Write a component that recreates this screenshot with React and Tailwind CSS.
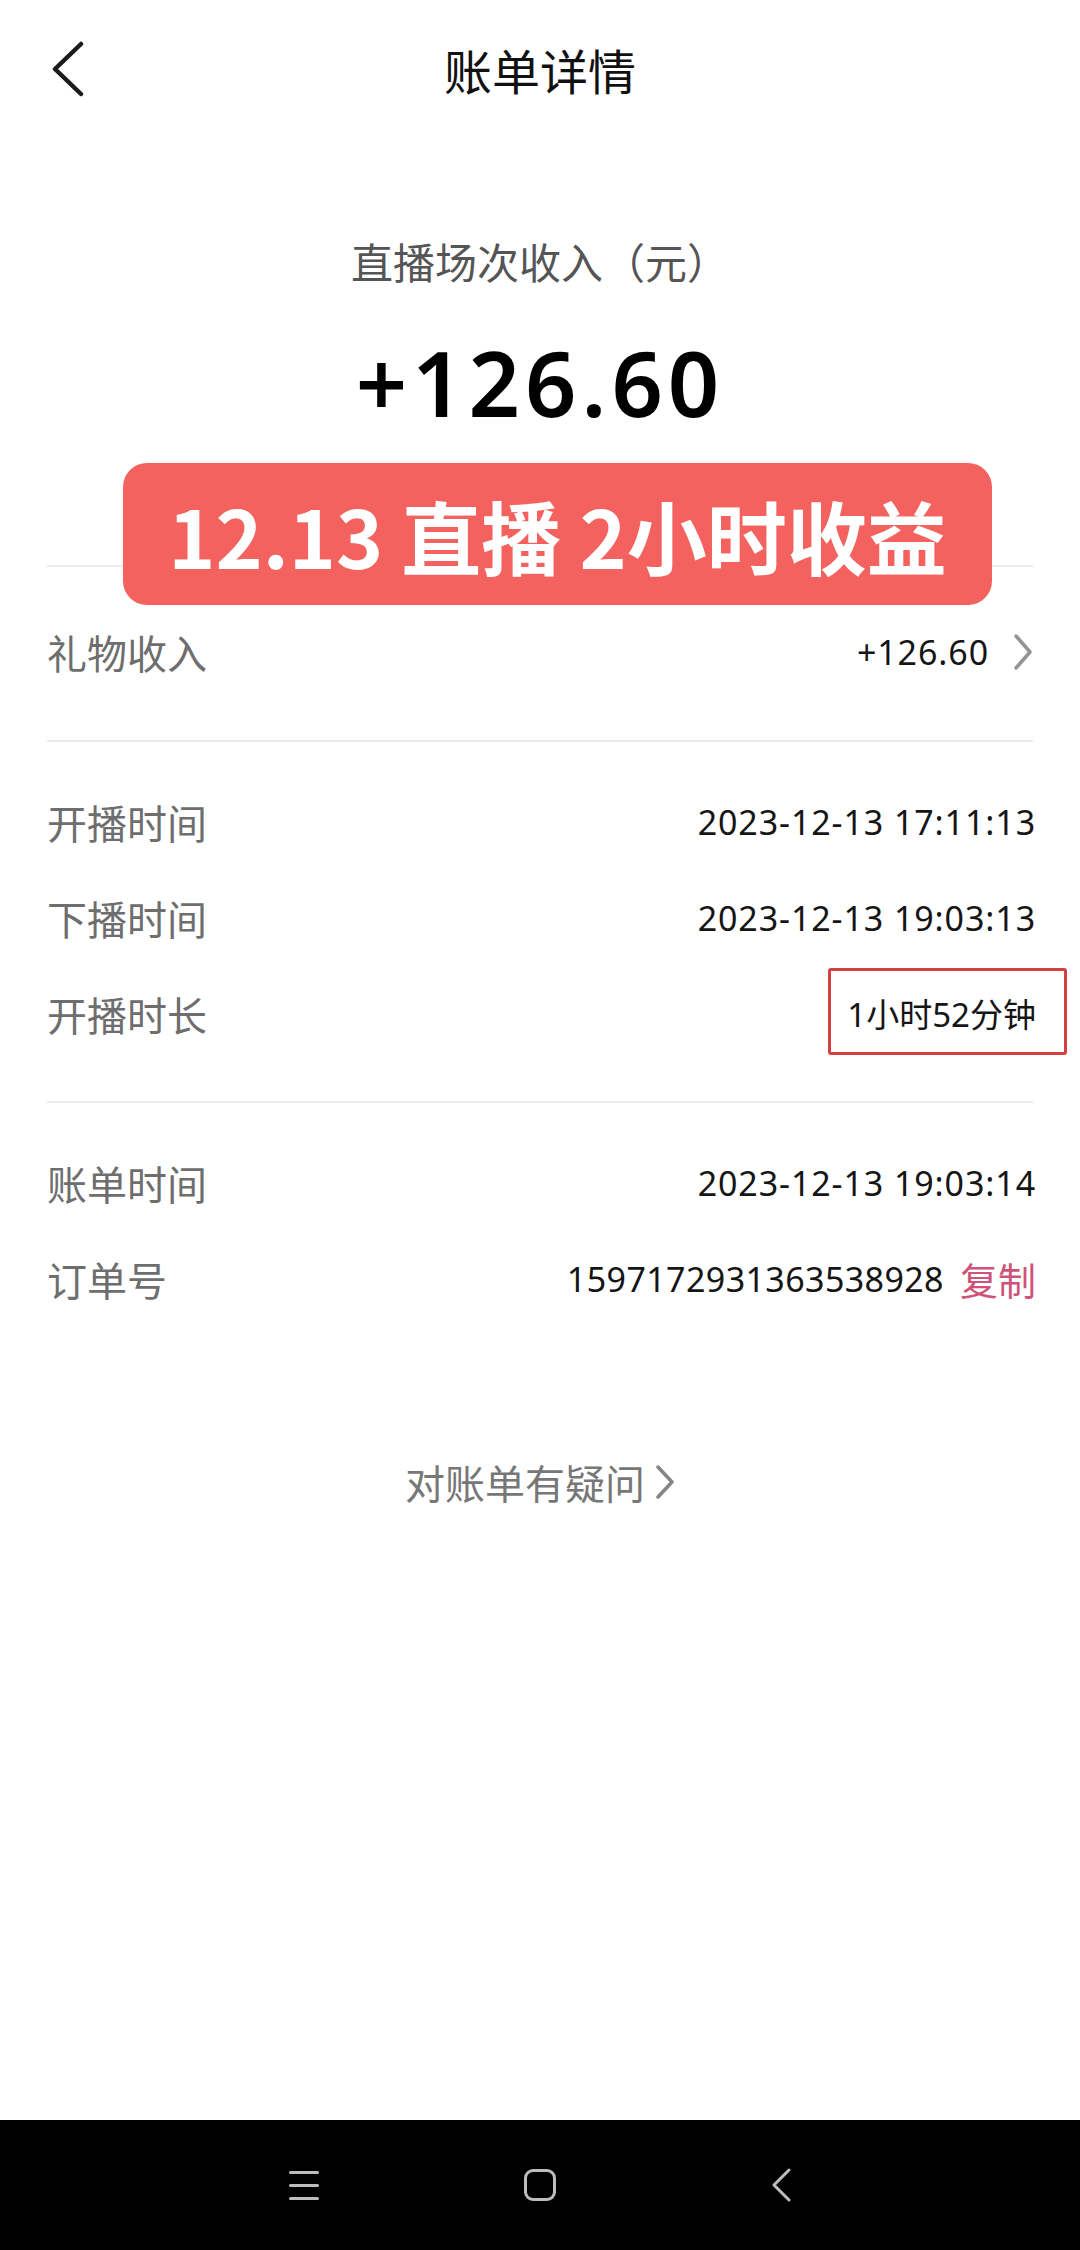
import { ChevronRight } from "lucide-react";

const latin = "[font-family:'Noto_Sans','Noto_Sans_CJK_SC',sans-serif]";
const cjk = "[font-family:'Noto_Sans_CJK_SC',sans-serif]";

const Row = ({ label, children, extra }) => (
  <div className="relative h-[96px] flex items-center justify-between pl-[47px] pr-[44px]">
    <span className={`${cjk} text-[40px] leading-none text-[#6e6e6e]`}>{label}</span>
    <div className="flex items-center">{children}</div>
    {extra}
  </div>
);

const Value = ({ children, tight }) => (
  <span
    className={`${latin} text-[34px] leading-none text-[#151515] ${tight ? "tracking-[0.4px]" : "tracking-[0.9px]"}`}
  >
    {children}
  </span>
);

const Divider = () => <div className="h-[2px] mx-[47px] bg-[#ececec]" />;

const App = () => {
  return (
    <div className="relative w-[1080px] h-[2250px] bg-white flex flex-col">
      {/* header */}
      <div className="h-[138px] grid grid-cols-[1fr_auto_1fr] items-center">
        <div className="pl-[51px] flex items-center">
          <svg width="34" height="56" viewBox="0 0 34 56" fill="none">
            <path d="M30 3 L4 28 L30 53" stroke="#1c1c1c" strokeWidth="4.5" strokeLinecap="round" strokeLinejoin="round" />
          </svg>
        </div>
        <h1 className={`${cjk} text-[48px] leading-none text-[#111]`}>账单详情</h1>
        <div />
      </div>

      <div className={`mt-[83px] h-[80px] flex items-center justify-center ${cjk} text-[42px] leading-none text-[#555]`}>
        直播场次收入（元）
      </div>
      <div className="mt-[31px] h-[100px] flex items-center justify-center">
        <span className={`${latin} text-[90px] leading-none font-semibold text-black tracking-[5px]`}>+126.60</span>
      </div>

      <div className="mt-[133px]">
        <Divider />
      </div>

      <div className="pt-[37px] pb-[40px]">
        <Row label="礼物收入">
          <Value>+126.60</Value>
          <svg className="ml-[24px] mr-[3px]" width="20" height="36" viewBox="0 0 20 36" fill="none">
            <path d="M3 2 L17 18 L3 34" stroke="#949494" strokeWidth="3.5" strokeLinecap="round" strokeLinejoin="round" />
          </svg>
        </Row>
      </div>
      <Divider />

      <div className="pt-[32px] pb-[39px]">
        <Row label="开播时间">
          <Value>2023-12-13 17:11:13</Value>
        </Row>
        <Row label="下播时间">
          <Value>2023-12-13 19:03:13</Value>
        </Row>
        <Row
          label="开播时长"
          extra={<div className="absolute top-[2px] right-[13px] w-[239px] h-[87px] border-[3px] border-[#d2403f] rounded-[3px]" />}
        >
          <span className={`${latin} text-[33px] leading-none text-[#151515]`}>1小时52分钟</span>
        </Row>
      </div>
      <Divider />

      <div className="pt-[32px]">
        <Row label="账单时间">
          <Value>2023-12-13 19:03:14</Value>
        </Row>
        <Row label="订单号">
          <Value tight>1597172931363538928</Value>
          <span className={`${cjk} ml-[16px] text-[38px] leading-none text-[#cf5378]`}>复制</span>
        </Row>
      </div>

      <div className="mt-[125px] h-[60px] flex items-center justify-center">
        <span className={`${cjk} text-[40px] leading-none text-[#777]`}>对账单有疑问</span>
        <svg className="ml-[10px]" width="20" height="34" viewBox="0 0 20 34" fill="none">
          <path d="M3 2 L17 17 L3 32" stroke="#858585" strokeWidth="3.5" strokeLinecap="round" strokeLinejoin="round" />
        </svg>
      </div>

      {/* sticker over the divider */}
      <div className="absolute top-[463px] left-[123px] w-[869px] h-[142px] rounded-[24px] bg-[#f3625e] flex items-center justify-center">
        <span className={`${cjk} text-[80px] leading-none font-bold text-white`}>12.13 直播 2小时收益</span>
      </div>

      {/* system nav bar */}
      <div className="mt-auto h-[130px] bg-black flex items-center pl-[289px]">
        <div className="w-[30px] flex flex-col gap-[10px]">
          <div className="h-[3px] bg-[#bdbdbd] rounded-full" />
          <div className="h-[3px] bg-[#bdbdbd] rounded-full" />
          <div className="h-[3px] bg-[#bdbdbd] rounded-full" />
        </div>
        <div className="ml-[205px] w-[32px] h-[32px] border-[3px] border-[#bdbdbd] rounded-[9px]" />
        <svg className="ml-[214px]" width="22" height="34" viewBox="0 0 22 34" fill="none">
          <path d="M19 2 L4 17 L19 32" stroke="#bdbdbd" strokeWidth="3" strokeLinecap="round" strokeLinejoin="round" />
        </svg>
      </div>
    </div>
  );
};

export default App;
